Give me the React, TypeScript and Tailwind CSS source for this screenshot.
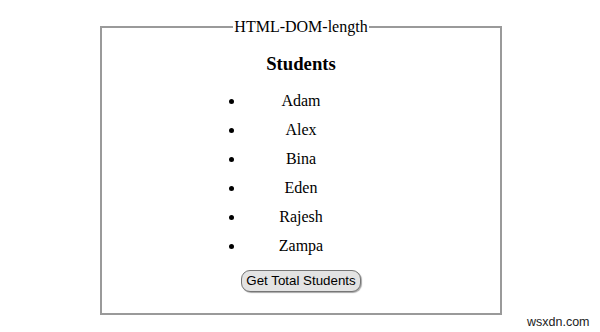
const students = ["Adam", "Alex", "Bina", "Eden", "Rajesh", "Zampa"];

export default function App() {
  return (
    <div className="relative w-[600px] h-[332px] bg-white overflow-hidden font-['Liberation_Serif',serif] text-black">
      <div className="pt-[18px] pl-[100px]">
        <fieldset className="w-[402px] h-[297px] border-2 border-[#9a9a9a] px-2 text-center">
          <legend className="mx-auto px-[1px] text-[16px] leading-[18px]">HTML-DOM-length</legend>
          <h3 className="mt-[17px] text-[18.72px] leading-[22px] font-bold">Students</h3>
          <ul className="mx-auto mt-[11px] w-[112px] list-disc text-[16px] leading-[29px]">
            {students.map((s) => (
              <li key={s}>{s}</li>
            ))}
          </ul>
          <button className="mt-[10px] h-[22px] px-[4px] rounded-[9px] border border-[#767676] bg-[#e3e3e3] font-['Liberation_Sans',sans-serif] text-[13.33px] leading-[18px] shadow-[1px_1px_1px_rgba(0,0,0,0.35)]">
            Get Total Students
          </button>
        </fieldset>
      </div>
      <span className="absolute left-[527px] top-[315px] font-['Liberation_Sans',sans-serif] text-[12.5px] leading-[14px] text-[#222]">
        wsxdn.com
      </span>
    </div>
  );
}
